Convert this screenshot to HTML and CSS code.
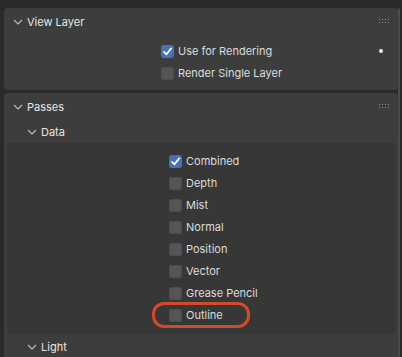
FILE: index.html
```html
<!DOCTYPE html>
<html>

<head>
  <title>View Layer Properties</title>
  <link rel="stylesheet" href="styles.css">
</head>

<body>
  <div class="editor">
    <div class="panels">
      <!-- View Layer -->
      <div class="panel view-layer">
        <div class="panel-header">
          <svg class="chevron" width="10" height="6" viewBox="0 0 10 6"><path d="M1 1 L5 5 L9 1" /></svg>
          <span class="panel-title">View Layer</span>
          <svg class="grip" width="11" height="5" viewBox="0 0 11 5">
            <rect x="0" y="0" width="1" height="1" /><rect x="3" y="0" width="1" height="1" /><rect x="6" y="0" width="1" height="1" /><rect x="9" y="0" width="1" height="1" />
            <rect x="0" y="3" width="1" height="1" /><rect x="3" y="3" width="1" height="1" /><rect x="6" y="3" width="1" height="1" /><rect x="9" y="3" width="1" height="1" />
          </svg>
        </div>
        <div class="panel-body">
          <div class="prop-row">
            <span class="checkbox checked">
              <svg width="13" height="13" viewBox="0 0 13 13"><path d="M3 6.8 L5.5 9.3 L10.2 3.4" /></svg>
            </span>
            <span class="prop-label">Use for Rendering</span>
            <span class="decorator"></span>
          </div>
          <div class="prop-row">
            <span class="checkbox"></span>
            <span class="prop-label">Render Single Layer</span>
          </div>
        </div>
      </div>

      <!-- Passes -->
      <div class="panel passes">
        <div class="panel-header">
          <svg class="chevron" width="10" height="6" viewBox="0 0 10 6"><path d="M1 1 L5 5 L9 1" /></svg>
          <span class="panel-title">Passes</span>
          <svg class="grip" width="11" height="5" viewBox="0 0 11 5">
            <rect x="0" y="0" width="1" height="1" /><rect x="3" y="0" width="1" height="1" /><rect x="6" y="0" width="1" height="1" /><rect x="9" y="0" width="1" height="1" />
            <rect x="0" y="3" width="1" height="1" /><rect x="3" y="3" width="1" height="1" /><rect x="6" y="3" width="1" height="1" /><rect x="9" y="3" width="1" height="1" />
          </svg>
        </div>

        <div class="subpanel-header">
          <svg class="chevron" width="10" height="6" viewBox="0 0 10 6"><path d="M1 1 L5 5 L9 1" /></svg>
          <span class="panel-title">Data</span>
        </div>
        <div class="subpanel-body">
          <div class="prop-row">
            <span class="checkbox checked">
              <svg width="13" height="13" viewBox="0 0 13 13"><path d="M3 6.8 L5.5 9.3 L10.2 3.4" /></svg>
            </span>
            <span class="prop-label">Combined</span>
          </div>
          <div class="prop-row"><span class="checkbox"></span><span class="prop-label">Depth</span></div>
          <div class="prop-row"><span class="checkbox"></span><span class="prop-label">Mist</span></div>
          <div class="prop-row"><span class="checkbox"></span><span class="prop-label">Normal</span></div>
          <div class="prop-row"><span class="checkbox"></span><span class="prop-label">Position</span></div>
          <div class="prop-row"><span class="checkbox"></span><span class="prop-label">Vector</span></div>
          <div class="prop-row"><span class="checkbox"></span><span class="prop-label">Grease Pencil</span></div>
          <div class="prop-row highlighted">
            <span class="checkbox"></span><span class="prop-label">Outline</span>
            <span class="highlight-ring"></span>
          </div>
        </div>

        <div class="subpanel-header">
          <svg class="chevron" width="10" height="6" viewBox="0 0 10 6"><path d="M1 1 L5 5 L9 1" /></svg>
          <span class="panel-title">Light</span>
        </div>
      </div>
    </div>
    <div class="scrollbar"></div>
  </div>
</body>

</html>
```

FILE: styles.css
```css
body {
  margin: 0;
  background-color: #2a2a2a;
  font-family: Inter, 'Noto Sans', sans-serif;
  font-size: 11px;
  color: #e2e2e2;
  overflow: hidden;
}

.editor {
  display: flex;
  height: 357px;
  padding: 8px 0 0 4px;
  box-sizing: border-box;
}

.panels {
  width: 394px;
  display: flex;
  flex-direction: column;
  gap: 3px;
}

.scrollbar {
  width: 2px;
  background-color: #4b4b4b;
  border-radius: 1px;
}

.panel {
  background-color: #3d3d3d;
  border-radius: 4px;
}

.view-layer {
  height: 82px;
  flex-shrink: 0;
  box-sizing: border-box;
}

.passes {
  flex: 1;
  min-height: 0;
  overflow: hidden;
  border-radius: 4px 4px 0 0;
}

.panel-header {
  height: 26px;
  box-sizing: border-box;
  display: flex;
  align-items: center;
  padding: 1px 8px 0 9px;
}

.subpanel-header {
  height: 24px;
  box-sizing: border-box;
  display: flex;
  align-items: center;
  padding: 1px 0 0 23px;
}

.chevron {
  fill: none;
  stroke: #bdbdbd;
  stroke-width: 1.1;
  margin-right: 4px;
}

.panel-title {
  color: #e6e6e6;
  flex: 1;
}

.grip {
  fill: #8c8c8c;
}

.panel-body {
  padding-top: 6px;
}

.subpanel-body {
  background-color: #373737;
  margin: 0 3px;
  border-radius: 0 0 4px 4px;
  padding: 7px 0 8px;
}

.prop-row {
  height: 22px;
  display: flex;
  align-items: center;
  position: relative;
}

.panel-body .prop-row {
  padding-left: 157px;
}

.subpanel-body .prop-row {
  padding-left: 162px;
}

.checkbox {
  width: 13px;
  height: 13px;
  border-radius: 3px;
  background-color: #555555;
  box-shadow: inset 0 0 0 1px #4c4c4c;
  margin-right: 4px;
  display: flex;
}

.checkbox.checked {
  background-color: #4772b3;
  box-shadow: none;
}

.checkbox svg {
  fill: none;
  stroke: #ffffff;
  stroke-width: 1.7;
  stroke-linecap: round;
  stroke-linejoin: round;
}

.prop-label {
  color: #dcdcdc;
}

.decorator {
  width: 4px;
  height: 4px;
  border-radius: 50%;
  background-color: #e8e8e8;
  margin-left: auto;
  margin-right: 15px;
}

.highlight-ring {
  position: absolute;
  left: 145px;
  top: -2px;
  width: 92px;
  height: 20px;
  border: 3px solid #d2492c;
  border-radius: 12px;
}
```
